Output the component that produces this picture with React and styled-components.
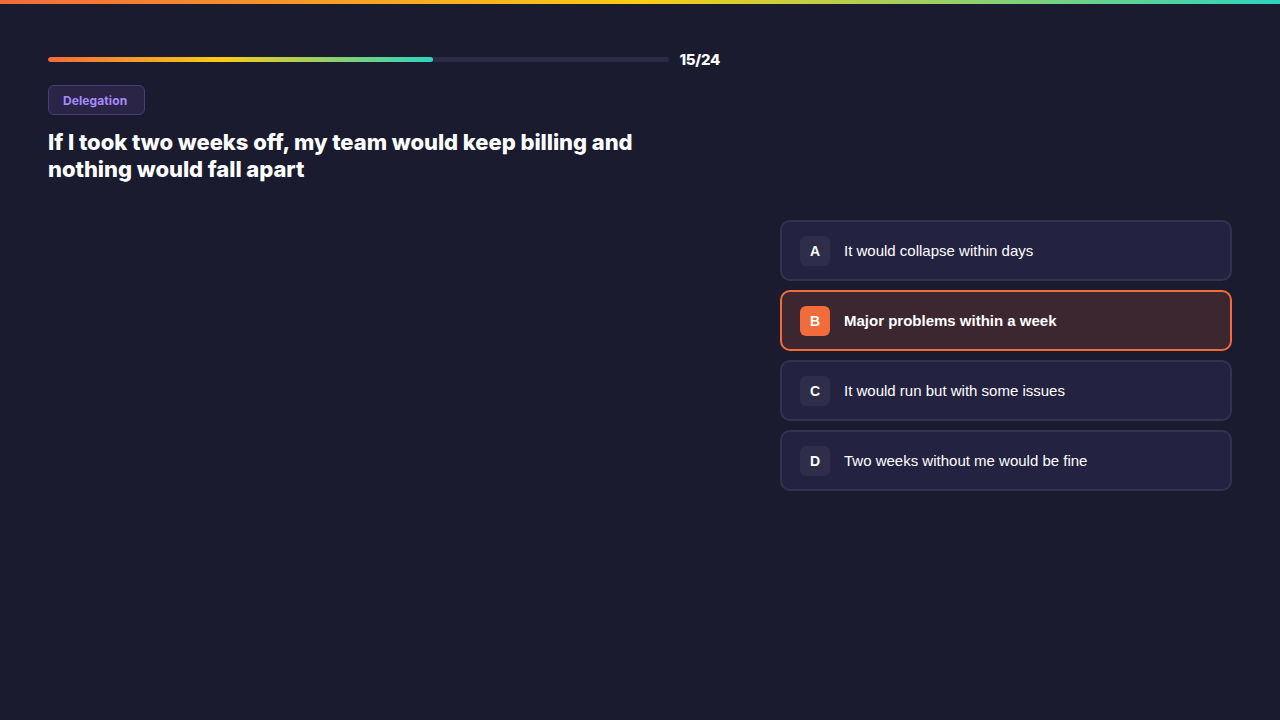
import React from "react"
import styled, { createGlobalStyle } from "styled-components"

const GlobalStyle = createGlobalStyle`
  html, body {
    margin: 0;
    padding: 0;
    background: #1b1b2f;
  }
  body {
    font-family: "Liberation Sans", Arial, sans-serif;
    color: #ffffff;
  }
`

const Page = styled.div`
  min-height: 720px;
  background: #1b1b2f;
`

const TopStripe = styled.div`
  height: 4px;
  background: linear-gradient(90deg, #f26b3a 0%, #facc15 50%, #2dd4bf 100%);
`

const Content = styled.main`
  padding: 46px 48px 0 48px;
`

const Header = styled.section`
  width: 672px;
`

const ProgressRow = styled.div`
  display: flex;
  align-items: center;
  gap: 10px;
`

const Track = styled.div`
  flex: 1;
  height: 5px;
  border-radius: 3px;
  background: #2c2b47;
  overflow: hidden;
`

const Fill = styled.div`
  height: 100%;
  border-radius: 3px;
  background: linear-gradient(90deg, #f26b3a 0%, #facc15 45%, #2dd4bf 100%);
`

const Count = styled.span`
  font-family: "Inter", "Noto Sans", sans-serif;
  font-weight: 800;
  font-size: 15px;
  letter-spacing: -0.3px;
`

const Tag = styled.span`
  display: inline-flex;
  align-items: center;
  margin-top: 16px;
  height: 28px;
  padding: 0 17px 0 14px;
  border-radius: 6px;
  background: #2a2547;
  border: 1px solid #463d7a;
  color: #a78bfa;
  font-family: "Inter", "Noto Sans", sans-serif;
  font-weight: 700;
  font-size: 12px;
  letter-spacing: 0.1px;
`

const Question = styled.h1`
  margin: 14px 0 0 0;
  font-family: "Inter", "Noto Sans", sans-serif;
  font-weight: 800;
  font-size: 22px;
  line-height: 27px;
  letter-spacing: -0.05px;
  color: #ffffff;
`

const Options = styled.div`
  display: flex;
  flex-direction: column;
  gap: 9px;
  width: 452px;
  margin: 37px 0 0 auto;
`

const Option = styled.button`
  display: flex;
  align-items: center;
  gap: 14px;
  height: 61px;
  padding: 0 18px;
  box-sizing: border-box;
  border-radius: 10px;
  border: 2px solid ${p => (p.$selected ? "#f26b3a" : "#33324f")};
  background: ${p => (p.$selected ? "#3c262f" : "#232240")};
  color: #ffffff;
  font-family: "Liberation Sans", Arial, sans-serif;
  font-size: 15px;
  font-weight: ${p => (p.$selected ? 700 : 400)};
  text-align: left;
  cursor: pointer;
`

const Letter = styled.span`
  display: flex;
  align-items: center;
  justify-content: center;
  width: 30px;
  height: 30px;
  border-radius: 6px;
  background: ${p => (p.$selected ? "#f26b3a" : "#2e2d4a")};
  font-weight: 700;
  font-size: 14px;
  color: #ffffff;
`

const answers = [
  { key: "A", text: "It would collapse within days" },
  { key: "B", text: "Major problems within a week" },
  { key: "C", text: "It would run but with some issues" },
  { key: "D", text: "Two weeks without me would be fine" },
]

function App() {
  const selected = "B"
  const current = 15
  const total = 24

  return (
    <Page>
      <GlobalStyle />
      <TopStripe />
      <Content>
        <Header>
          <ProgressRow>
            <Track>
              <Fill style={{ width: `${(current / total) * 100 - 0.6}%` }} />
            </Track>
            <Count>
              {current}/{total}
            </Count>
          </ProgressRow>
          <Tag>Delegation</Tag>
          <Question>
            If I took two weeks off, my team would keep billing and nothing
            would fall apart
          </Question>
        </Header>
        <Options>
          {answers.map(a => (
            <Option key={a.key} $selected={a.key === selected}>
              <Letter $selected={a.key === selected}>{a.key}</Letter>
              {a.text}
            </Option>
          ))}
        </Options>
      </Content>
    </Page>
  )
}

export default App
